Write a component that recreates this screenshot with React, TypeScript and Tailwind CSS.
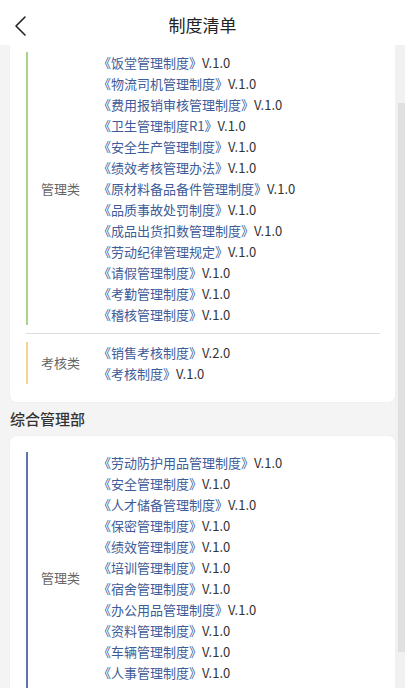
import React from "react";

const font = { fontFamily: '"Noto Sans CJK SC", "Noto Sans", sans-serif' };

type Group = { label: string; bar: string; items: [string, string][]; extra?: boolean };

function GroupBlock({ g }: { g: Group }) {
  return (
    <div className={`flex border-l-2 ${g.bar}`}>
      <div className="w-[72px] shrink-0 flex items-center pl-[13px] text-[13px] text-[#666]">{g.label}</div>
      <div className="flex flex-col">
        {g.items.map(([t, v], i) => (
          <div key={i} className="h-[21px] leading-[21px] text-[13px] whitespace-nowrap -ml-[2px]">
            <span className="text-[#3d5c99]">《{t}》</span>
            <span className="text-[#333]">{v}</span>
          </div>
        ))}
        {g.extra && <div className="h-[21px]" />}
      </div>
    </div>
  );
}

const g1: Group = {
  label: "管理类",
  bar: "border-[#a8d48c]",
  items: [
    ["饭堂管理制度", "V.1.0"],
    ["物流司机管理制度", "V.1.0"],
    ["费用报销审核管理制度", "V.1.0"],
    ["卫生管理制度R1", "V.1.0"],
    ["安全生产管理制度", "V.1.0"],
    ["绩效考核管理办法", "V.1.0"],
    ["原材料备品备件管理制度", "V.1.0"],
    ["品质事故处罚制度", "V.1.0"],
    ["成品出货扣数管理制度", "V.1.0"],
    ["劳动纪律管理规定", "V.1.0"],
    ["请假管理制度", "V.1.0"],
    ["考勤管理制度", "V.1.0"],
    ["稽核管理制度", "V.1.0"],
  ],
};

const g2: Group = {
  label: "考核类",
  bar: "border-[#f3d48e]",
  items: [
    ["销售考核制度", "V.2.0"],
    ["考核制度", "V.1.0"],
  ],
};

const g3: Group = {
  label: "管理类",
  bar: "border-[#5d76a9]",
  extra: true,
  items: [
    ["劳动防护用品管理制度", "V.1.0"],
    ["安全管理制度", "V.1.0"],
    ["人才储备管理制度", "V.1.0"],
    ["保密管理制度", "V.1.0"],
    ["绩效管理制度", "V.1.0"],
    ["培训管理制度", "V.1.0"],
    ["宿舍管理制度", "V.1.0"],
    ["办公用品管理制度", "V.1.0"],
    ["资料管理制度", "V.1.0"],
    ["车辆管理制度", "V.1.0"],
    ["人事管理制度", "V.1.0"],
  ],
};

export default function App() {
  return (
    <div className="w-[405px] h-[688px] overflow-hidden flex flex-col bg-white" style={font}>
      <div className="h-[45px] shrink-0 relative flex items-center justify-center bg-white">
        <svg className="absolute left-[13px] top-[15px]" width="16" height="22" viewBox="0 0 16 22" fill="none">
          <path d="M12 2 L3 11 L12 20" stroke="#222" strokeWidth="1.6" strokeLinecap="round" strokeLinejoin="round" />
        </svg>
        <span className="text-[17px] text-[#222] mt-[5px]">制度清单</span>
      </div>
      <div className="flex flex-1 min-h-0">
        <div className="flex-1 bg-[#f4f4f4] pl-[10px] overflow-hidden">
          <div className="bg-white rounded-b-md pt-[7px] pb-[18px] pl-[16px] pr-[15px] shadow-[0_0_1px_rgba(0,0,0,0.12)]">
            <GroupBlock g={g1} />
            <div className="h-px bg-[#dcdcdc] my-[8px]" />
            <GroupBlock g={g2} />
          </div>
          <div className="h-[34px] flex items-center text-[15px] font-medium text-[#333]">综合管理部</div>
          <div className="bg-white rounded-md pt-[16px] pb-[18px] pl-[16px] pr-[15px] shadow-[0_0_1px_rgba(0,0,0,0.12)]">
            <GroupBlock g={g3} />
          </div>
        </div>
        <div className="w-[10px] shrink-0 bg-[#f1f1f1] flex flex-col">
          <div className="h-[58px]" />
          <div className="ml-[3px] w-[7px] h-[549px] bg-[#e0e0e0]" />
        </div>
      </div>
    </div>
  );
}
